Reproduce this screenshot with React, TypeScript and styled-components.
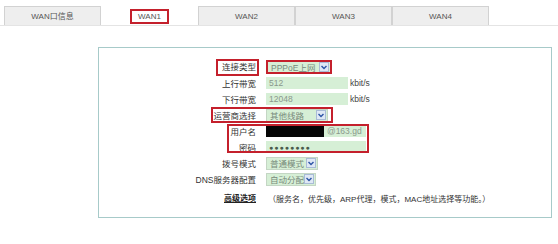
import React from 'react'
import styled, { createGlobalStyle } from 'styled-components'

const GlobalStyle = createGlobalStyle`
  body {
    margin: 0;
    background: #ffffff;
    font-family: "Liberation Sans", "Noto Sans CJK SC", sans-serif;
  }
`

const RED = '#c4202c'
const FIELD = '#d6efd6'

const Page = styled.div`
  width: 558px;
  height: 244px;
  padding-top: 6px;
  box-sizing: border-box;
  overflow: hidden;
`

const TabBar = styled.div`
  display: flex;
  padding-left: 4px;
  border-bottom: 1px solid #e4e4e4;
`

const Tab = styled.div<{ $active?: boolean }>`
  width: 97px;
  height: 19px;
  box-sizing: border-box;
  display: flex;
  align-items: center;
  justify-content: center;
  background: ${p => (p.$active ? '#ffffff' : '#eeeeee')};
  border: 1px solid ${p => (p.$active ? 'transparent' : '#d2d2d2')};
  border-bottom: none;
  font-size: 8px;
  color: #555;
`

const TabText = styled.span<{ $marked?: boolean }>`
  padding: 1px 6px;
  line-height: 9px;
  ${p => p.$marked && `outline: 2px solid ${RED}; outline-offset: 0;`}
`

const Panel = styled.div`
  margin: 21px 6px 0 98px;
  height: 171px;
  box-sizing: border-box;
  border: 1px solid #a7cac9;
  padding-top: 11px;
  background: #ffffff;
`

const Row = styled.div<{ $boxLeft?: number; $boxWidth?: number; $gap?: number }>`
  position: relative;
  display: flex;
  align-items: center;
  height: 16px;
  margin-top: ${p => p.$gap ?? 0}px;
  font-size: 8.5px;
  color: #333;
  ${p =>
    p.$boxWidth
      ? `&::after {
    content: '';
    position: absolute;
    left: ${p.$boxLeft}px;
    width: ${p.$boxWidth}px;
    top: 0;
    bottom: 0;
    border: 2px solid ${RED};
    box-sizing: border-box;
    pointer-events: none;
  }`
      : ''}
`

const Group = styled.div`
  position: relative;
  &::after {
    content: '';
    position: absolute;
    left: 128px;
    width: 142px;
    top: 1px;
    bottom: 2px;
    border: 2px solid ${RED};
    box-sizing: border-box;
    pointer-events: none;
  }
`

const Label = styled.div`
  width: 157px;
  flex: none;
  text-align: right;
`

const LabelText = styled.span<{ $marked?: boolean; $strong?: boolean }>`
  display: inline-block;
  line-height: 11px;
  ${p => p.$marked && `outline: 2px solid ${RED}; outline-offset: 1px; padding-left: 3px;`}
  ${p => p.$strong && `font-weight: bold; text-decoration: underline; font-size: 8px; color: #222;`}
`

const Value = styled.div`
  margin-left: 10px;
  display: flex;
  align-items: center;
`

const Select = styled.div<{ $w: number; $marked?: boolean }>`
  width: ${p => p.$w}px;
  height: ${p => (p.$marked ? 14 : 13)}px;
  box-sizing: border-box;
  display: flex;
  align-items: center;
  justify-content: space-between;
  background: ${FIELD};
  border: ${p => (p.$marked ? `2px solid ${RED}` : '1px solid #c4d6c4')};
  padding-left: 3px;
  color: #76897a;
  font-size: 8.5px;
`

const Arrow = styled.div`
  width: 10px;
  height: 10px;
  margin-right: 1px;
  box-sizing: border-box;
  background: #dfe8f5;
  border: 1px solid #a9bbd6;
  display: flex;
  align-items: center;
  justify-content: center;
`

const Field = styled.div<{ $w: number }>`
  width: ${p => p.$w}px;
  height: 12px;
  background: ${FIELD};
  color: #8a988c;
  padding-left: 3px;
  box-sizing: border-box;
  display: flex;
  align-items: center;
  font-size: 8.5px;
`

const Unit = styled.span`
  margin-left: 2px;
  color: #444;
  font-size: 8.5px;
`

const Redacted = styled.div`
  width: 58px;
  height: 11px;
  background: #050505;
`

const Dots = styled.span`
  color: #4a5a4c;
  font-size: 7px;
  letter-spacing: 1px;
`

const Note = styled.span`
  font-size: 8px;
  color: #333;
  margin-left: 2px;
`

function SelectBox({ text, w, marked }: { text: string; w: number; marked?: boolean }) {
  return (
    <Select $w={w} $marked={marked}>
      {text}
      <Arrow>
        <svg width="6" height="5" viewBox="0 0 6 5">
          <path d="M0.5 1 L3 3.6 L5.5 1" fill="none" stroke="#2f56a6" strokeWidth="1.4" />
        </svg>
      </Arrow>
    </Select>
  )
}

const tabs = ['WAN口信息', 'WAN1', 'WAN2', 'WAN3', 'WAN4']

export default function App() {
  return (
    <Page>
      <GlobalStyle />
      <TabBar>
        {tabs.map((t, i) => (
          <Tab key={t} $active={i === 1}>
            <TabText $marked={i === 1}>{t}</TabText>
          </Tab>
        ))}
      </TabBar>
      <Panel>
        <Row>
          <Label><LabelText $marked>连接类型</LabelText></Label>
          <Value><SelectBox text="PPPoE上网" w={66} marked /></Value>
        </Row>
        <Row>
          <Label>上行带宽</Label>
          <Value><Field $w={82}>512</Field><Unit>kbit/s</Unit></Value>
        </Row>
        <Row>
          <Label>下行带宽</Label>
          <Value><Field $w={82}>12048</Field><Unit>kbit/s</Unit></Value>
        </Row>
        <Row $boxLeft={112} $boxWidth={122}>
          <Label>运营商选择</Label>
          <Value><SelectBox text="其他线路" w={62} /></Value>
        </Row>
        <Group>
          <Row>
            <Label>用户名</Label>
            <Value>
              <Redacted />
              <Field $w={42}>@163.gd</Field>
            </Value>
          </Row>
          <Row>
            <Label>密码</Label>
            <Value><Field $w={100}><Dots>●●●●●●●●</Dots></Field></Value>
          </Row>
        </Group>
        <Row>
          <Label>拨号模式</Label>
          <Value><SelectBox text="普通模式" w={52} /></Value>
        </Row>
        <Row>
          <Label>DNS服务器配置</Label>
          <Value><SelectBox text="自动分配" w={50} /></Value>
        </Row>
        <Row $gap={3}>
          <Label><LabelText $strong>高级选项</LabelText></Label>
          <Value>
            <Note>（服务名，优先级，ARP代理，模式，MAC地址选择等功能。）</Note>
          </Value>
        </Row>
      </Panel>
    </Page>
  )
}
